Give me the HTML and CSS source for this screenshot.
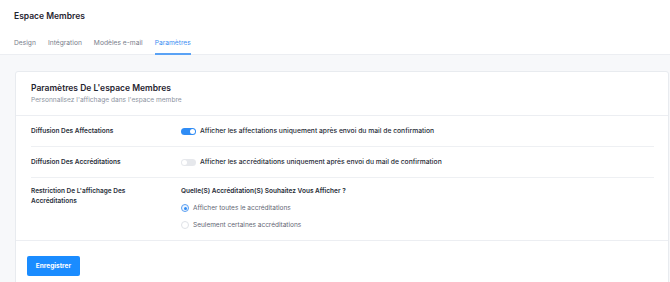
FILE: index.html
```html
<!DOCTYPE html>
<html lang="fr">
<head>
<meta charset="utf-8">
<title>Espace Membres</title>
<link rel="stylesheet" href="styles.css">
</head>
<body>
<header class="top">
  <h1 class="top-title">Espace Membres</h1>
  <nav class="tabs">
    <a class="tab">Design</a>
    <a class="tab">Intégration</a>
    <a class="tab">Modèles e-mail</a>
    <a class="tab active">Paramètres</a>
  </nav>
</header>
<main class="page">
  <section class="card">
    <div class="card-head">
      <h2 class="card-title">Paramètres De L'espace Membres</h2>
      <p class="card-sub">Personnalisez l'affichage dans l'espace membre</p>
    </div>
    <div class="card-body">
      <div class="row">
        <div class="label">Diffusion Des Affectations</div>
        <div class="value">
          <span class="toggle on"><span class="knob"></span></span>
          <span class="opt-text">Afficher les affectations uniquement après envoi du mail de confirmation</span>
        </div>
      </div>
      <div class="row">
        <div class="label">Diffusion Des Accréditations</div>
        <div class="value">
          <span class="toggle"><span class="knob"></span></span>
          <span class="opt-text">Afficher les accréditations uniquement après envoi du mail de confirmation</span>
        </div>
      </div>
      <div class="row last">
        <div class="label multi">Restriction De L'affichage Des Accréditations</div>
        <div class="value col">
          <div class="question">Quelle(S) Accréditation(S) Souhaitez Vous Afficher ?</div>
          <label class="radio checked"><span class="dot"></span><span>Afficher toutes le accréditations</span></label>
          <label class="radio"><span class="dot"></span><span>Seulement certaines accréditations</span></label>
        </div>
      </div>
    </div>
    <div class="card-foot">
      <button class="btn">Enregistrer</button>
    </div>
  </section>
</main>
</body>
</html>
```

FILE: styles.css
```css
* { box-sizing: border-box; margin: 0; padding: 0; }
html, body { height: 100%; }
body {
  font-family: Inter, "Noto Sans", "Liberation Sans", sans-serif;
  background: #f7f8fa;
  color: #2a2f3a;
  overflow: hidden;
}
.top {
  background: #fff;
  border-bottom: 1px solid #eceef2;
  padding: 10px 14px 0;
}
.top-title {
  font-size: 8.5px;
  line-height: 12px;
  font-weight: 600;
  color: #1f2430;
}
.tabs {
  display: flex;
  gap: 12px;
  margin-top: 16px;
}
.tab {
  font-size: 6.7px;
  line-height: 10px;
  color: #7a808c;
  border-bottom: 2px solid transparent;
  margin-bottom: -1px;
  padding-bottom: 5px;
}
.tab.active {
  color: #3d8ef2;
  border-bottom-color: #5aa2f5;
}
.page {
  padding: 16px 1px 0 15px;
}
.card {
  background: #fff;
  border: 1px solid #e8ebef;
  border-radius: 3px;
  min-height: 260px;
}
.card-head {
  padding: 10px 15px 9px;
  border-bottom: 1px solid #eceef2;
}
.card-title {
  font-size: 8.5px;
  line-height: 12px;
  font-weight: 600;
  color: #1f2430;
}
.card-sub {
  font-size: 6.6px;
  line-height: 12px;
  color: #8c93a0;
}
.card-body {
  padding: 0 14px 0 15px;
}
.row {
  display: flex;
  border-bottom: 1px solid #eef0f3;
  padding: 9px 0;
}
.row.last {
  border-bottom: none;
  padding: 8px 0 9px;
}
.label {
  width: 150px;
  flex: none;
  font-size: 6.5px;
  line-height: 12px;
  font-weight: 600;
  color: #2a2f3a;
}
.label.multi {
  line-height: 10px;
  padding-right: 50px;
}
.value {
  display: flex;
  align-items: center;
  gap: 4px;
  font-size: 6.75px;
  line-height: 12px;
  font-weight: 500;
  color: #262b36;
}
.value.col {
  flex-direction: column;
  align-items: flex-start;
  gap: 0;
  font-size: 6.5px;
}
.toggle {
  width: 15px;
  height: 7px;
  border-radius: 4px;
  background: #e6e8ec;
  position: relative;
  flex: none;
}
.toggle .knob {
  position: absolute;
  top: 1px;
  left: 1px;
  width: 5px;
  height: 5px;
  border-radius: 50%;
  background: #fff;
}
.toggle.on { background: #2f8cf5; }
.toggle.on .knob { left: 9px; }
.question {
  font-weight: 600;
  line-height: 10px;
}
.radio {
  display: flex;
  align-items: center;
  gap: 4px;
  font-weight: 400;
  color: #5f6673;
  margin-top: 6px;
}
.radio + .radio { margin-top: 5px; }
.radio .dot {
  width: 8px;
  height: 8px;
  border-radius: 50%;
  border: 1px solid #dfe2e7;
  background: #fff;
  position: relative;
  flex: none;
}
.radio.checked .dot {
  border-color: #5ba0f2;
  background: #eef5ff;
}
.radio.checked .dot::after {
  content: "";
  position: absolute;
  left: 1.5px;
  top: 1.5px;
  width: 3px;
  height: 3px;
  border-radius: 50%;
  background: #2f8cf5;
}
.card-foot {
  border-top: 1px solid #eceef2;
  padding: 11px 11px;
}
.btn {
  font-family: inherit;
  font-size: 6.5px;
  font-weight: 700;
  color: #fff;
  background: #1a8cff;
  border: none;
  border-radius: 2px;
  height: 20px;
  width: 53px;
}
```
